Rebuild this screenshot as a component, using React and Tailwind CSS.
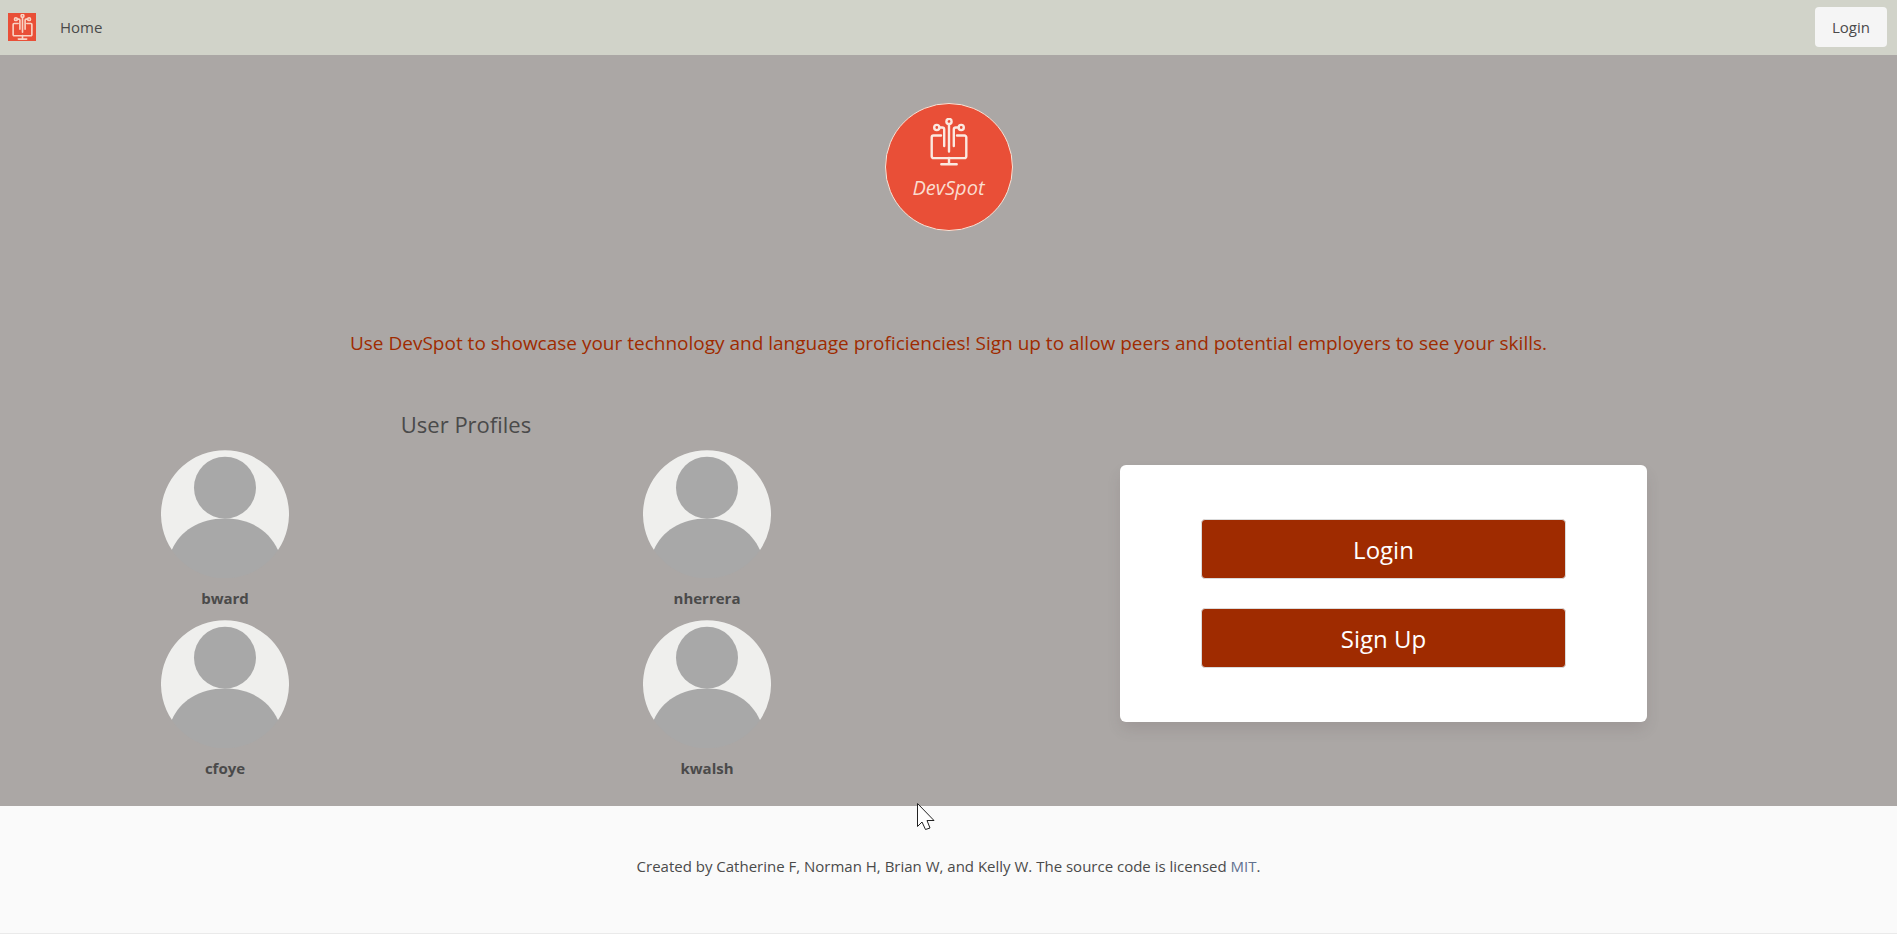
const profiles = ["bward", "nherrera", "cfoye", "kwalsh"];

function LogoMark({ stroke, strokeWidth, className }) {
  return (
    <svg viewBox="0 0 38 48" className={className} fill="none" stroke={stroke} strokeWidth={strokeWidth} strokeLinejoin="round" strokeLinecap="round" aria-hidden="true">
      <path d="M11 17.500H3.500a1.800 1.800 0 0 0-1.800 1.800v19a1.800 1.800 0 0 0 1.800 1.800h31a1.800 1.800 0 0 0 1.800-1.800v-19a1.800 1.800 0 0 0-1.800-1.800H27" />
      <path d="M19 40v6M11.300 46.300h15.400M19 6v27.500" />
      <path d="M9.500 9.500h2.700a2 2 0 0 1 2 2V28M28.500 9.500h-2.700a2 2 0 0 0-2 2V28" />
      <circle cx="19" cy="3.500" r="2.600" />
      <circle cx="6.800" cy="9.500" r="2.600" />
      <circle cx="31.200" cy="9.500" r="2.600" />
    </svg>
  );
}

function Avatar() {
  return (
    <svg viewBox="0 0 128 128" className="size-32" aria-hidden="true">
      <path d="M10.800 99.800A64 64 0 1 1 117.200 99.800Z" fill="#efefed" />
      <circle cx="64" cy="37.700" r="31" fill="#a8a8a8" />
      <path d="M10.800 100C19 81 38 68.500 64 68.500S108.500 81 117 100.200A64 64 0 0 1 10.800 100Z" fill="#a8a8a8" />
    </svg>
  );
}

function Navbar() {
  return (
    <nav className="flex h-[55px] items-center bg-[#d1d3c9] pr-2.5 pb-0.5 pl-2">
      <a href="#" aria-label="DevSpot" className="flex size-7 items-center justify-center bg-[#e94f37]">
        <LogoMark stroke="#f9d3c4" strokeWidth={3} className="h-[26px] w-[21px]" />
      </a>
      <a href="#" className="ml-6">Home</a>
      <a href="#" className="ml-auto flex h-10 items-center rounded bg-[#f5f5f5] px-[17px]">Login</a>
    </nav>
  );
}

function ActionButton({ children }) {
  return (
    <button type="button" className="h-[60px] w-full rounded border border-[#dbdbdb] bg-[#9f2b00] pt-0.5 text-2xl text-white">
      {children}
    </button>
  );
}

export default function App() {
  return (
    <div className="bg-[#fafafa] font-['Open_Sans','Noto_Sans',sans-serif] text-[15px] leading-6 text-[#4a4a4a]">
      <Navbar />
      <main className="bg-[#aba7a5] pb-6">
        <header className="flex flex-col items-center pt-12">
          <div className="flex size-32 flex-col items-center rounded-full border border-[#f6e4d8] bg-[#e94f37] pt-3.5">
            <LogoMark stroke="#fbe9e0" strokeWidth={2.4} className="h-12 w-[38px]" />
            <span className="mt-2 text-xl leading-7 font-medium text-[#fadccf] italic">DevSpot</span>
          </div>
          <p className="mt-24 px-4 text-center text-[19px] leading-8 text-[#9f2b00]">
            Use DevSpot to showcase your technology and language proficiencies! Sign up to allow peers and potential employers to see your skills.
          </p>
        </header>
        <div className="mt-12 grid grid-cols-[932fr_965fr]">
          <section>
            <h2 className="text-center text-[22px] leading-[35px]">User Profiles</h2>
            <ul className="mt-2 grid grid-cols-2 gap-x-8 gap-y-2">
              {profiles.map((name) => (
                <li key={name}>
                  <a href="#" className="flex flex-col items-center gap-2 pb-0.5 font-bold">
                    <Avatar />
                    {name}
                  </a>
                </li>
              ))}
            </ul>
          </section>
          <section className="flex items-start justify-center pt-[58px] pr-[62px]">
            <div className="flex w-7/12 flex-col gap-[29px] rounded-md bg-white px-[81px] py-[54px] shadow-[0_8px_16px_-2px_rgba(74,50,60,0.14)]">
              <ActionButton>Login</ActionButton>
              <ActionButton>Sign Up</ActionButton>
            </div>
          </section>
        </div>
      </main>
      <footer className="border-b border-[#eaeaea] px-6 pt-12 pb-[55px] text-center">
        Created by Catherine F, Norman H, Brian W, and Kelly W. The source code is licensed{" "}
        <a href="#" className="text-[#61718f]">MIT</a>.
      </footer>
      <svg viewBox="0 0 20 28" className="absolute top-[803px] left-[917px] h-7 w-5" aria-hidden="true">
        <path d="M.5.5V23.500L5 19L8.500 26.500L13 25L10 17.500H17Z" fill="#fff" stroke="#222" />
      </svg>
    </div>
  );
}
